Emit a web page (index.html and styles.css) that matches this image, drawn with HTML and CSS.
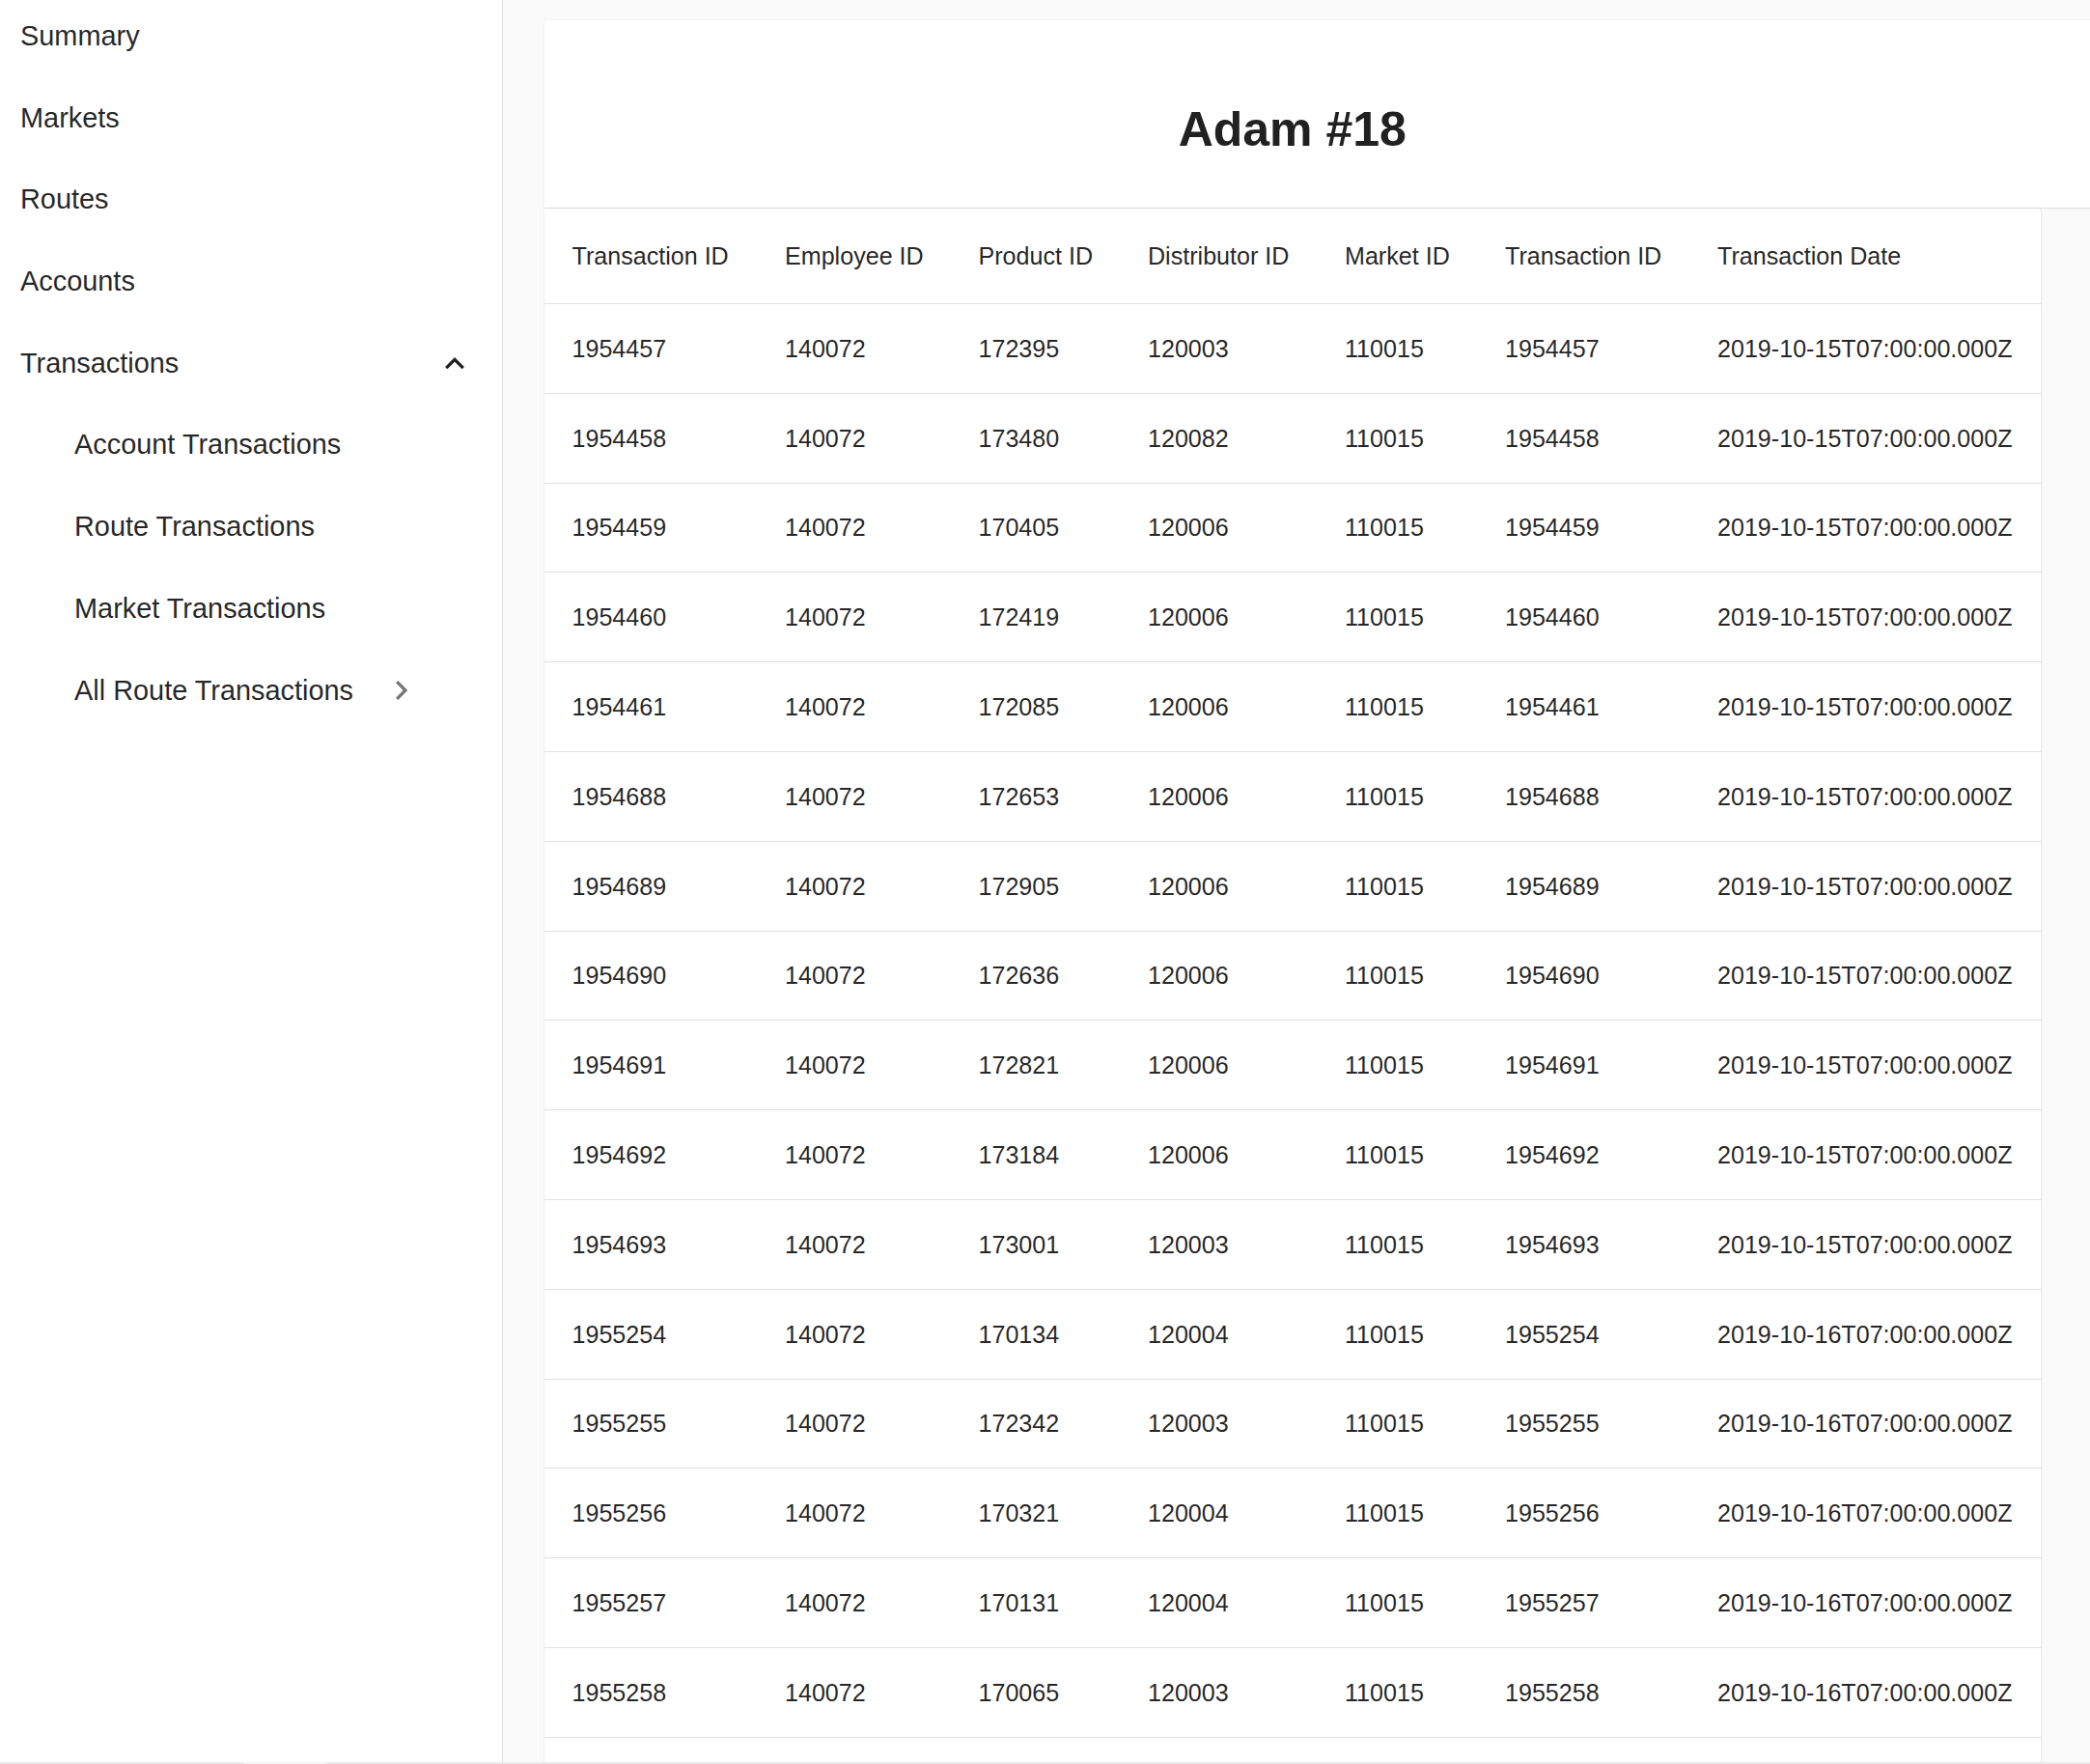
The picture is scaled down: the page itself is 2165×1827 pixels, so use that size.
FILE: index.html
```html
<!DOCTYPE html>
<html lang="en">
<head>
<meta charset="utf-8">
<title>Adam #18 – Transactions</title>
<link rel="stylesheet" href="styles.css">
</head>
<body>
<div class="app">
  <aside class="sidebar">
    <nav class="nav">
      <div class="nav-item">Summary</div>
      <div class="nav-item">Markets</div>
      <div class="nav-item">Routes</div>
      <div class="nav-item">Accounts</div>
      <div class="nav-item nav-open">
        <span>Transactions</span>
        <svg class="icon-less" viewBox="6 8 12 7.41" width="20" height="12.35" aria-hidden="true"><path d="M12 8l-6 6 1.41 1.41L12 10.83l4.59 4.58L18 14z"/></svg>
      </div>
      <div class="nav-item nav-sub">Account Transactions</div>
      <div class="nav-item nav-sub">Route Transactions</div>
      <div class="nav-item nav-sub">Market Transactions</div>
      <div class="nav-item nav-sub">
        <span>All Route Transactions</span>
        <svg class="icon-right" viewBox="8.59 6 7.41 12" width="12.35" height="20" aria-hidden="true"><path d="M10 6L8.59 7.41 13.17 12l-4.58 4.59L10 18l6-6z"/></svg>
      </div>
    </nav>
  </aside>
  <main class="main">
    <section class="heading-card">
      <h1 class="title">Adam #18</h1>
    </section>
    <section class="table-card">
      <table class="data">
        <colgroup>
          <col class="c1"><col class="c2"><col class="c3"><col class="c4"><col class="c5"><col class="c6"><col class="c7">
        </colgroup>
        <thead>
          <tr><th>Transaction ID</th><th>Employee ID</th><th>Product ID</th><th>Distributor ID</th><th>Market ID</th><th>Transaction ID</th><th>Transaction Date</th></tr>
        </thead>
        <tbody>
          <tr><td>1954457</td><td>140072</td><td>172395</td><td>120003</td><td>110015</td><td>1954457</td><td>2019-10-15T07:00:00.000Z</td></tr>
          <tr><td>1954458</td><td>140072</td><td>173480</td><td>120082</td><td>110015</td><td>1954458</td><td>2019-10-15T07:00:00.000Z</td></tr>
          <tr><td>1954459</td><td>140072</td><td>170405</td><td>120006</td><td>110015</td><td>1954459</td><td>2019-10-15T07:00:00.000Z</td></tr>
          <tr><td>1954460</td><td>140072</td><td>172419</td><td>120006</td><td>110015</td><td>1954460</td><td>2019-10-15T07:00:00.000Z</td></tr>
          <tr><td>1954461</td><td>140072</td><td>172085</td><td>120006</td><td>110015</td><td>1954461</td><td>2019-10-15T07:00:00.000Z</td></tr>
          <tr><td>1954688</td><td>140072</td><td>172653</td><td>120006</td><td>110015</td><td>1954688</td><td>2019-10-15T07:00:00.000Z</td></tr>
          <tr><td>1954689</td><td>140072</td><td>172905</td><td>120006</td><td>110015</td><td>1954689</td><td>2019-10-15T07:00:00.000Z</td></tr>
          <tr><td>1954690</td><td>140072</td><td>172636</td><td>120006</td><td>110015</td><td>1954690</td><td>2019-10-15T07:00:00.000Z</td></tr>
          <tr><td>1954691</td><td>140072</td><td>172821</td><td>120006</td><td>110015</td><td>1954691</td><td>2019-10-15T07:00:00.000Z</td></tr>
          <tr><td>1954692</td><td>140072</td><td>173184</td><td>120006</td><td>110015</td><td>1954692</td><td>2019-10-15T07:00:00.000Z</td></tr>
          <tr><td>1954693</td><td>140072</td><td>173001</td><td>120003</td><td>110015</td><td>1954693</td><td>2019-10-15T07:00:00.000Z</td></tr>
          <tr><td>1955254</td><td>140072</td><td>170134</td><td>120004</td><td>110015</td><td>1955254</td><td>2019-10-16T07:00:00.000Z</td></tr>
          <tr><td>1955255</td><td>140072</td><td>172342</td><td>120003</td><td>110015</td><td>1955255</td><td>2019-10-16T07:00:00.000Z</td></tr>
          <tr><td>1955256</td><td>140072</td><td>170321</td><td>120004</td><td>110015</td><td>1955256</td><td>2019-10-16T07:00:00.000Z</td></tr>
          <tr><td>1955257</td><td>140072</td><td>170131</td><td>120004</td><td>110015</td><td>1955257</td><td>2019-10-16T07:00:00.000Z</td></tr>
          <tr><td>1955258</td><td>140072</td><td>170065</td><td>120003</td><td>110015</td><td>1955258</td><td>2019-10-16T07:00:00.000Z</td></tr>
          <tr class="row-more"><td></td><td></td><td></td><td></td><td></td><td></td><td></td></tr>
        </tbody>
      </table>
    </section>
  </main>
</div>
<div class="hscroll"><div class="hscroll-thumb"></div></div>
</body>
</html>
```
FILE: styles.css
```css
* { box-sizing: border-box; }

html, body {
  margin: 0;
  padding: 0;
  height: 100%;
}

body {
  font-family: "Liberation Sans", Arial, sans-serif;
  color: rgba(0, 0, 0, 0.87);
  background: #fafafa;
  overflow: hidden;
}

.app {
  display: flex;
  height: 100vh;
  overflow: hidden;
}

/* Sidebar */
.sidebar {
  flex: 0 0 521px;
  width: 521px;
  background: #fff;
  border-right: 1px solid #e0e0e0;
}

.nav {
  display: flex;
  flex-direction: column;
  margin-top: -5px;
}

.nav-item {
  display: flex;
  align-items: center;
  height: 84.7px;
  padding: 0 39px 0 21px;
  font-size: 28.9px;
  line-height: 1.2;
  color: rgba(0, 0, 0, 0.87);
}

.nav-open {
  justify-content: space-between;
}

.nav-sub {
  padding-left: 77px;
}

.icon-less {
  fill: rgba(0, 0, 0, 0.87);
  flex: 0 0 auto;
}

.icon-right {
  fill: rgba(0, 0, 0, 0.54);
  margin-left: 44px;
  flex: 0 0 auto;
}

/* Main */
.main {
  flex: 1 1 auto;
  min-width: 0;
  padding: 20.7px 0 0 42.5px;
  overflow: hidden;
}

.heading-card {
  width: calc(100% + 60px);
  background: #fff;
  border-radius: 4px 0 0 0;
  box-shadow: 0 0 2px rgba(0, 0, 0, 0.10);
  border-bottom: 1px solid #e0e0e0;
  padding: 85.7px 0 52.6px 0;
}

.title {
  width: 1550.5px;
  margin: 0;
  text-align: center;
  font-size: 50px;
  font-weight: 700;
  line-height: 56px;
  color: #212121;
}

.table-card {
  width: 1550.5px;
  background: #fff;
  border-radius: 0 4px 0 0;
  box-shadow: 1px 0 2px rgba(0, 0, 0, 0.08), -1px 0 1px rgba(0, 0, 0, 0.05);
}

.data {
  width: 1550.5px;
  table-layout: fixed;
  border-collapse: separate;
  border-spacing: 0;
  font-size: 25.1px;
}

.c1 { width: 220.5px; }
.c2 { width: 200.5px; }
.c3 { width: 175.5px; }
.c4 { width: 204px; }
.c5 { width: 166px; }
.c6 { width: 220px; }
.c7 { width: 364px; }

.data th,
.data td {
  text-align: left;
  vertical-align: middle;
  font-weight: 400;
  padding: 0 0 0 29px;
  border-bottom: 1px solid #e0e0e0;
  white-space: nowrap;
  line-height: 1.2;
  color: rgba(0, 0, 0, 0.87);
}

.data th {
  height: 99px;
}

.data td {
  height: 92.8px;
}

/* thin bottom scroll track */
.hscroll {
  position: fixed;
  left: 0;
  right: 0;
  bottom: 0;
  height: 2px;
  background: #ebebeb;
}

.hscroll-thumb {
  position: absolute;
  left: 252px;
  width: 85px;
  top: 0;
  bottom: 0;
  background: #f6f6f6;
}
```
